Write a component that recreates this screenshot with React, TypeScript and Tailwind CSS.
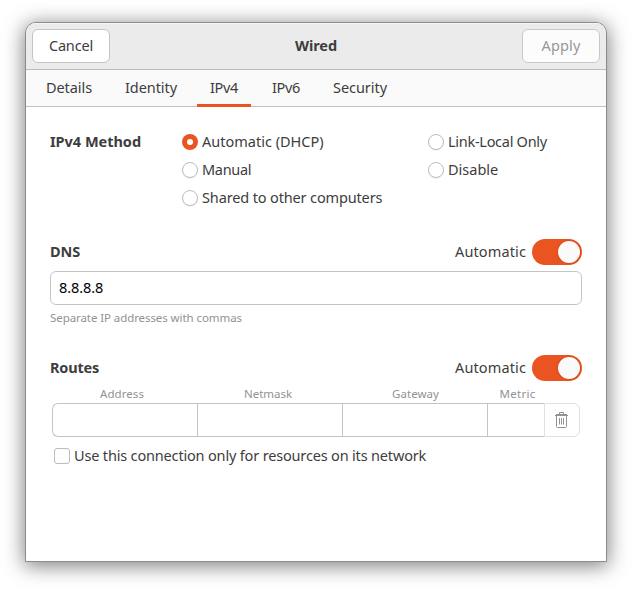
import type { ReactNode } from "react";

function Radio({ label, checked, tracking = "" }: { label: string; checked?: boolean; tracking?: string }) {
  return (
    <div className="flex h-5 items-center gap-1">
      <span
        className={
          checked
            ? "flex size-4 shrink-0 items-center justify-center rounded-full bg-[#e95420]"
            : "size-4 shrink-0 rounded-full border border-[#bcbcbc] bg-white shadow-[0_1px_1px_rgba(0,0,0,0.06)]"
        }
      >
        {checked && <span className="size-1.5 rounded-full bg-white" />}
      </span>
      <span className={`pb-0.5 whitespace-nowrap ${tracking}`}>{label}</span>
    </div>
  );
}

function Tab({ children, active, className }: { children: ReactNode; active?: boolean; className: string }) {
  return (
    <div
      className={`-mb-px flex shrink-0 justify-center border-b-[3px] pt-[7px] whitespace-nowrap ${
        active ? "border-[#e95420]" : "border-transparent"
      } ${className}`}
    >
      {children}
    </div>
  );
}

function Switch() {
  return (
    <div className="flex h-[26px] w-[50px] items-center justify-end rounded-full bg-[#e95420] pr-0.5">
      <div className="size-[22px] rounded-full bg-[#fafafa] shadow-[0_0_1px_1px_rgba(190,60,15,0.35)]" />
    </div>
  );
}

function SectionHeader({ title, tracking }: { title: string; tracking: string }) {
  return (
    <div className="flex h-[26px] items-center justify-between">
      <span className={`pb-0.5 font-bold ${tracking}`}>{title}</span>
      <div className="flex items-center gap-1.5">
        <span className="pb-0.5 tracking-[0.12px]">Automatic</span>
        <Switch />
      </div>
    </div>
  );
}

function TrashIcon() {
  return (
    <svg width="13" height="16" viewBox="0 0 13 16" fill="none" stroke="#929292">
      <path d="M4.5 3V0.5h4V3" />
      <path d="M1 2.5h11M0 3.5h13" />
      <path d="M1.5 4v10.5q0 1 1 1h8q1 0 1-1V4" />
      <path d="M4.5 6v6.5M6.5 6v6.5M8.5 6v6.5" />
    </svg>
  );
}

export default function App() {
  return (
    <div className="h-[590px] w-[632px] overflow-hidden bg-white px-[25px] pt-[22px] font-['Noto_Sans','Open_Sans',sans-serif] text-[14.5px] leading-5 text-[#3d3d3d]">
      <div className="flex h-[540px] w-[582px] flex-col overflow-hidden rounded-t-[11px] border border-[#8c8c8c] bg-white shadow-[0_3px_20px_1px_rgba(0,0,0,0.5)]">
        <header className="flex h-[47px] shrink-0 items-center justify-between border-t border-b border-t-[#f6f6f6] border-b-[#bcbcbc] bg-[#ebebeb] px-[6px] pb-px">
          <button className="h-[34px] w-[78px] rounded-[6px] border border-[#c4c4c4] bg-white pb-0.5 tracking-[-0.15px]">
            Cancel
          </button>
          <h1 className="pb-0.5 font-bold tracking-[-0.07px]">Wired</h1>
          <button className="h-[34px] w-[78px] rounded-[6px] border border-[#c8c8c8] bg-[#fcfcfc] pb-0.5 tracking-[0.15px] text-[#989898]">
            Apply
          </button>
        </header>

        <nav className="flex h-[37px] shrink-0 border-b border-[#c0c0c0] bg-[#fafafa] pl-[7px]">
          <Tab className="w-[72px] tracking-[-0.08px]">Details</Tab>
          <Tab className="ml-[6px] w-[80px] tracking-[-0.07px]">Identity</Tab>
          <Tab active className="ml-[6px] w-[54px] tracking-[-0.3px]">IPv4</Tab>
          <Tab className="ml-[8px] w-[54px] tracking-[-0.3px]">IPv6</Tab>
          <Tab className="ml-[6px] w-[82px] tracking-[-0.05px]">Security</Tab>
        </nav>

        <main className="flex flex-col px-6 pt-[25px]">
          <section className="flex">
            <h2 className="-mt-px w-[132px] font-bold tracking-[-0.02px]">IPv4 Method</h2>
            <div className="flex w-[246px] flex-col gap-2">
              <Radio label="Automatic (DHCP)" checked />
              <Radio label="Manual" tracking="tracking-[-0.3px]" />
              <Radio label="Shared to other computers" tracking="tracking-[-0.14px]" />
            </div>
            <div className="flex flex-col gap-2">
              <Radio label="Link-Local Only" tracking="tracking-[-0.28px]" />
              <Radio label="Disable" />
            </div>
          </section>

          <section className="mt-[31px]">
            <SectionHeader title="DNS" tracking="tracking-[-0.13px]" />
            <div className="mt-[6px] flex h-[34px] items-center rounded-[6px] border border-[#c4c4c4] bg-white px-2 pb-0.5 tracking-[-0.1px] text-black">
              8.8.8.8
            </div>
            <p className="mt-[5px] text-[11.5px] leading-4 tracking-[-0.08px] text-[#929292]">
              Separate IP addresses with commas
            </p>
          </section>

          <section className="mt-[29px]">
            <SectionHeader title="Routes" tracking="tracking-[-0.2px]" />
            <div className="mt-[5px] ml-[2px] grid w-[528px] grid-cols-[145px_145px_145px_57px_36px] text-center text-[11.5px] leading-4 text-[#929292]">
              <span className="pr-[5px] tracking-[0.07px]">Address</span>
              <span className="pr-[3px] tracking-[-0.03px]">Netmask</span>
              <span className="pl-0.5 tracking-[0.06px]">Gateway</span>
              <span className="pl-1 tracking-[0.28px]">Metric</span>
            </div>
            <div className="mt-px ml-[2px] flex h-[34px] w-[528px]">
              <div className="w-[145px] rounded-l-[6px] border border-r-0 border-[#c4c4c4]" />
              <div className="w-[145px] border border-r-0 border-[#c4c4c4]" />
              <div className="w-[145px] border border-r-0 border-[#c4c4c4]" />
              <div className="w-[57px] border border-r-0 border-[#c4c4c4]" />
              <div className="flex w-[36px] items-center justify-center rounded-r-[6px] border border-[#e0e0e0] pr-px">
                <TrashIcon />
              </div>
            </div>
            <div className="mt-[9px] ml-1 flex h-5 items-center gap-1">
              <span className="size-4 shrink-0 rounded-[3px] border border-[#bcbcbc] bg-white" />
              <span className="pb-0.5 whitespace-nowrap tracking-[-0.17px]">
                Use this connection only for resources on its network
              </span>
            </div>
          </section>
        </main>
      </div>
    </div>
  );
}
